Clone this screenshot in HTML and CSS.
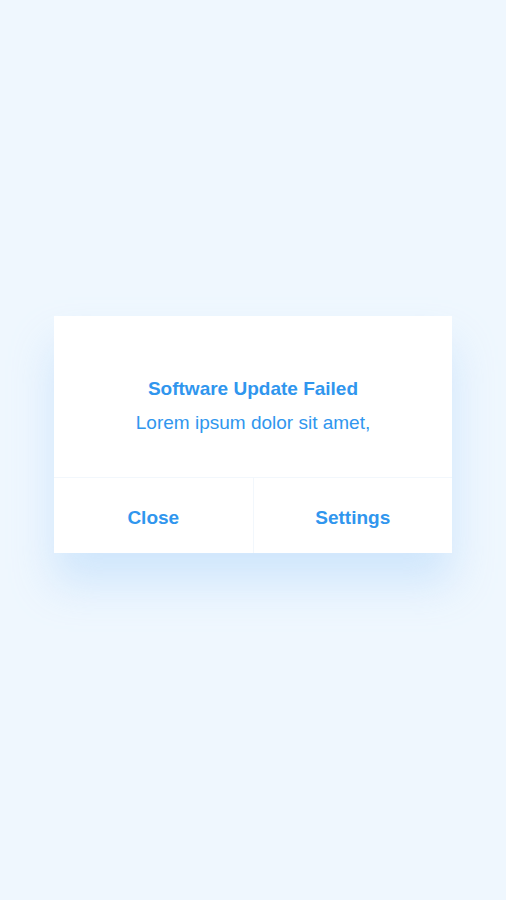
FILE: index.html
```html
<!DOCTYPE html>
<html>
<head>
<meta charset="utf-8">
<link rel="stylesheet" href="styles.css">
</head>
<body>
<div class="screen">
  <div class="dialog">
    <div class="dialog-body">
      <div class="title">Software Update Failed</div>
      <div class="message">Lorem ipsum dolor sit amet,</div>
    </div>
    <div class="actions">
      <div class="btn">Close</div>
      <div class="btn">Settings</div>
    </div>
  </div>
</div>
</body>
</html>
```
FILE: styles.css
```css
html, body {
  margin: 0;
  padding: 0;
}
body {
  background: #eff7fe;
  font-family: "Liberation Sans", Arial, sans-serif;
  color: #3096ee;
}
.screen {
  width: 506px;
  height: 900px;
  display: flex;
  justify-content: center;
  padding-top: 316px;
  box-sizing: border-box;
}
.dialog {
  width: 398px;
  height: 237px;
  background: #fff;
  display: flex;
  flex-direction: column;
  box-shadow: 0 30px 40px rgba(170, 210, 250, 0.45);
}
.dialog-body {
  height: 162px;
  display: flex;
  flex-direction: column;
  align-items: center;
  justify-content: center;
  gap: 12px;
  border-bottom: 1px solid #f2f7fc;
  padding-top: 18px;
  box-sizing: border-box;
}
.title {
  font-size: 19px;
  font-weight: bold;
}
.message {
  font-size: 19px;
}
.actions {
  flex: 1;
  display: flex;
}
.btn {
  flex: 1;
  display: flex;
  align-items: center;
  justify-content: center;
  font-size: 19px;
  font-weight: bold;
  padding-top: 5px;
}
.btn + .btn {
  border-left: 1px solid #f2f7fc;
}
```
